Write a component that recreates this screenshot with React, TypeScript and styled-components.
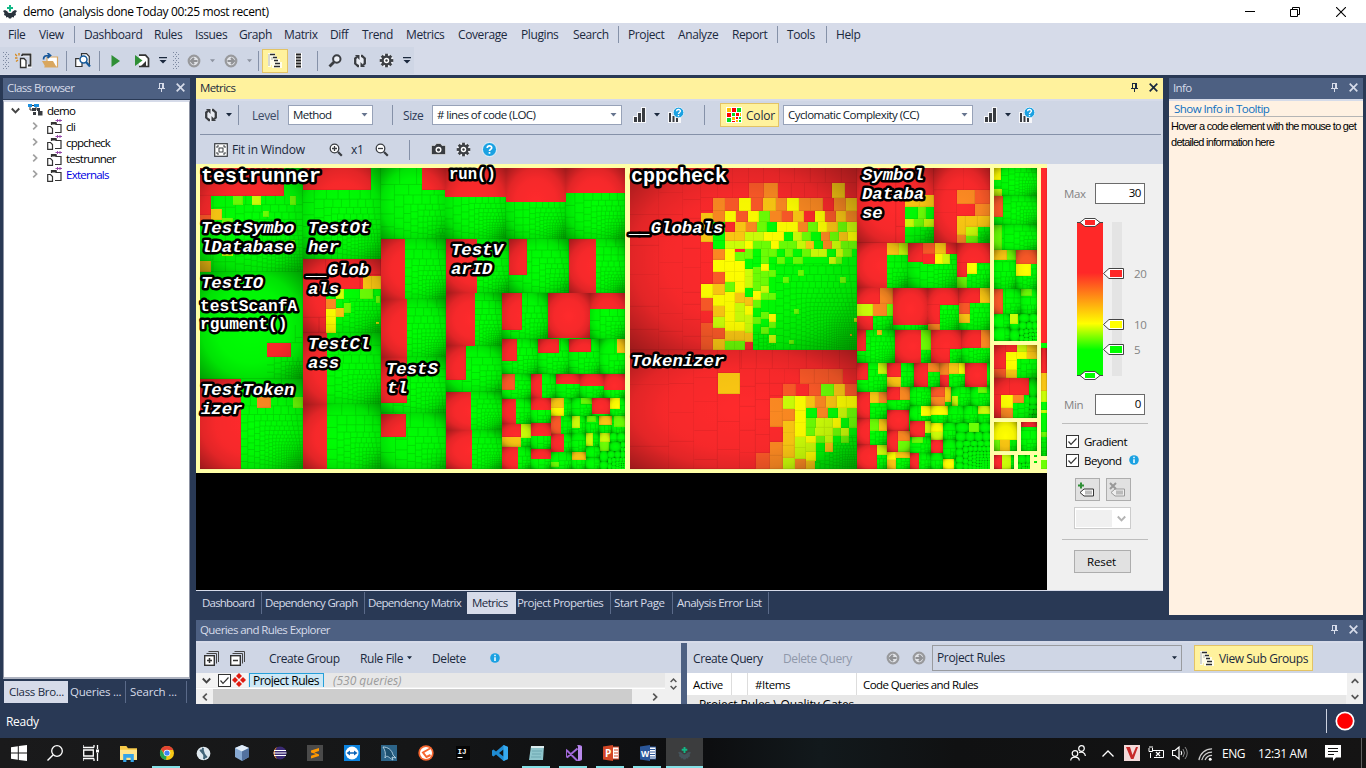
import React, { Fragment, ReactNode } from "react";
import styled, { createGlobalStyle } from "styled-components";

const navy = "#293955";
const slate = "#4d6082";
const mist = "#d6dbe9";
const bar = "#cfd6e5";
const ink = "#1b293e";

const Global = createGlobalStyle`
  body { margin: 0; background: ${navy}; }
  * { box-sizing: border-box; }
  svg { flex: none; }
  body, input, button { font-family: "Open Sans", "Noto Sans", sans-serif; font-size: 12px; letter-spacing: -0.4px; color: ${ink}; }
`;

/* ---------- flow helpers ---------- */

const Slot = styled.div<{ $w: number }>`
  width: ${(p) => p.$w}px;
  height: 100%;
  flex: none;
  display: flex;
  align-items: center;
  white-space: nowrap;
`;

type Item = [number, ReactNode];

function Run({ from, items }: { from: number; items: Item[] }) {
  return (
    <>
      <Slot $w={items[0][0] - from} />
      {items.map(([x, node], i) => (
        <Slot key={i} $w={i + 1 < items.length ? items[i + 1][0] - x : 0}>
          {node}
        </Slot>
      ))}
    </>
  );
}

const Sep = styled.i<{ $h?: number; $c?: string }>`
  width: 1px;
  height: ${(p) => p.$h ?? 20}px;
  flex: none;
  background: ${(p) => p.$c ?? "#8591a8"};
`;

const Text = styled.span<{ $c?: string; $ls?: number; $size?: number; $italic?: boolean }>`
  color: ${(p) => p.$c ?? "inherit"};
  letter-spacing: ${(p) => p.$ls ?? -0.4}px;
  font-size: ${(p) => p.$size ?? 12}px;
  font-style: ${(p) => (p.$italic ? "italic" : "normal")};
  flex: none;
`;

/* ---------- frame ---------- */

const Window = styled.div`
  width: 1366px;
  height: 768px;
  display: flex;
  flex-direction: column;
  overflow: hidden;
  background: ${navy};
`;
const TitleBar = styled.header`
  height: 23px;
  background: #fff;
  display: flex;
  flex: none;
  color: #000;
`;
const MenuBar = styled.nav`
  height: 24px;
  padding-bottom: 1px;
  background: ${mist};
  display: flex;
  flex: none;
`;
const ToolBand = styled.div`
  height: 28px;
  background: ${mist};
  display: flex;
  flex: none;
`;
const ToolStrip = styled.div`
  width: 414px;
  height: 27px;
  background: ${bar};
  display: flex;
`;
const Workspace = styled.main`
  height: 629px;
  padding: 3px 3px 0;
  display: flex;
  gap: 6px;
  flex: none;
`;
const Column = styled.div<{ $w: number }>`
  width: ${(p) => p.$w}px;
  display: flex;
  flex-direction: column;
  flex: none;
`;
const TopRow = styled.div`
  height: 537px;
  margin-bottom: 5px;
  display: flex;
  gap: 6px;
  flex: none;
`;
const PanelHead = styled.div<{ $active?: boolean }>`
  height: 21px;
  display: flex;
  flex: none;
  align-items: center;
  padding: 0 5px 2px 4px;
  background: ${(p) => (p.$active ? "#fff29d" : slate)};
  color: ${(p) => (p.$active ? ink : "#d6dbe9")};
  font-size: 11.5px;
  letter-spacing: -0.6px;
  > span { flex: 1; }
`;
const HeadTools = styled.div`
  display: flex;
  gap: 11px;
  align-items: center;
`;

function Head({ title, active }: { title: string; active?: boolean }) {
  const c = active ? ink : "#d6dbe9";
  return (
    <PanelHead $active={active}>
      <span>{title}</span>
      <HeadTools>
        <svg width="8" height="9" viewBox="0 0 8 9" shapeRendering="crispEdges">
          <path d="M2.500 0V6M2 .5H6.500M1 5.500H8M4.500 6V9" stroke={c} fill="none" />
          <rect x="5" width="2" height="6" fill={c} />
        </svg>
        <svg width="9" height="9" viewBox="0 0 9 9">
          <path d="M.7 .7L8.3 8.3M8.3 .7L.7 8.3" stroke={c} strokeWidth="1.7" />
        </svg>
      </HeadTools>
    </PanelHead>
  );
}

/* ---------- icons ---------- */

const Caret = ({ c = ink, w = 6 }: { c?: string; w?: number }) => (
  <svg width={w} height="4" viewBox="0 0 6 4"><path d="M0 0H6L3 3.5Z" fill={c} /></svg>
);
const OverCaret = () => (
  <svg width="8" height="7" viewBox="0 0 8 7"><path d="M0 0H8V1.3H0ZM.5 3H7.500L4 6.500Z" fill={ink} /></svg>
);
const Grip = () => (
  <svg width="6" height="18" viewBox="0 0 6 18">
    {Array.from({ length: 9 }, (_, i) => (
      <Fragment key={i}>
        <rect x={i % 2 ? 2 : 0} y={i * 2} width="1" height="1" fill="#7d89a1" />
        <rect x={i % 2 ? 5 : 3} y={i * 2} width="1" height="1" fill="#7d89a1" />
      </Fragment>
    ))}
  </svg>
);
const Refresh = () => (
  <svg width="14" height="14" viewBox="0 0 14 14">
    <circle cx="7" cy="7" r="6.500" fill="#fff" opacity=".55" />
    <g fill="none" stroke="#3a3d42" strokeWidth="2.300"><path d="M6 12H5L2.200 9.500V4.500L4 2.800M8 2H9L11.800 4.500V9.500L10 11.200" /></g>
    <path d="M2 1H6.500V6ZM12 13H7.500V8Z" fill="#3a3d42" />
  </svg>
);
const Gear = () => (
  <svg width="15" height="15" viewBox="-7.500 -7.500 15 15">
    <circle r="6.900" fill="#fff" opacity=".6" />
    {[0, 45, 90, 135].map((a) => <rect key={a} x="-1.400" y="-6.800" width="2.800" height="13.600" fill="#3d4045" transform={`rotate(${a})`} />)}
    <circle r="5" fill="#3d4045" /><circle r="2.700" fill="#fff" /><circle r="1.200" fill="#3d4045" />
  </svg>
);
const Magnifier = () => (
  <svg width="14" height="14" viewBox="0 0 14 14">
    <circle cx="8.800" cy="5" r="3.700" fill="#eef1f7" stroke="#3a3d42" strokeWidth="2" />
    <path d="M6 8L1.500 12.500" stroke="#3a3d42" strokeWidth="2.800" />
  </svg>
);
const Lens = ({ minus }: { minus?: boolean }) => (
  <svg width="14" height="14" viewBox="0 0 14 14">
    <circle cx="5.500" cy="5.500" r="4.300" fill="#fff" stroke="#3a3d42" strokeWidth="1.300" />
    <path d="M9 9L12.800 12.800" stroke="#3a3d42" strokeWidth="2.200" />
    <path d={minus ? "M3 5.500H8" : "M3 5.500H8M5.500 3V8"} stroke="#3a3d42" strokeWidth="1.300" />
  </svg>
);
const RoundArrow = ({ right }: { right?: boolean }) => (
  <svg width="14" height="14" viewBox="0 0 14 14">
    <circle cx="7" cy="7" r="5.300" fill="#e0e2e6" stroke="#98999c" strokeWidth="2.200" />
    <path d="M10.500 7H4.500M7 4L4 7L7 10" stroke="#909194" strokeWidth="2.200" fill="none" transform={right ? "rotate(180 7 7)" : undefined} />
  </svg>
);
const Hierarchy = () => (
  <svg width="14" height="15" viewBox="0 0 14 15">
    <path d="M0 0H7V3H9V6H12V9H14V15H4V12H3V14H0Z" fill="#fff" opacity=".8" />
    <path d="M1 1V13M4 4V7" stroke="#aeb2b4" fill="none" />
    <path d="M2 1.500H7M5 4.500H9M6 7.500H10M7 10.500H12M6 13.500H12" stroke="#2b2d30" strokeWidth="1.500" />
  </svg>
);
const Ladder = () => (
  <svg width="7" height="15" viewBox="0 0 7 15">
    <rect width="7" height="15" fill="#fff" /><path d="M1 1.500H6M1 4.500H6M1 7.500H6M1 10.500H6M1 13.500H6" stroke="#222" strokeWidth="1.800" />
  </svg>
);
const NewProject = () => (
  <svg width="17" height="16" viewBox="0 0 17 16">
    <path d="M7 1.500H16V13H11" fill="none" stroke="#fff" strokeWidth="4" opacity=".7" />
    <path d="M7 1.500H15.500V12.500H13M7 1.500V3" fill="none" stroke="#333" strokeWidth="1.800" />
    <path d="M5.500 5.500H9L11 7.500V14.500H5.500Z" fill="#fff" stroke="#333" strokeWidth="1.300" />
    <path d="M0 1L2 3M4 0V2.500M0 5H2.500M1 8.500L3 7" stroke="#d68b22" strokeWidth="1.400" />
  </svg>
);
const OpenProject = () => (
  <svg width="17" height="15" viewBox="0 0 17 15">
    <path d="M5 8V4H15.500V14H3Z" fill="#fff" stroke="#dba862" strokeWidth="1.200" />
    <path d="M0 8H11L14.500 14H3.500Z" fill="#d9a75f" />
    <path d="M1.500 6.500C1.500 3 3 2.500 7 2.500M5.500 0L8.500 2.500L5.500 5" fill="none" stroke="#16579b" strokeWidth="1.700" />
  </svg>
);
const DocSearch = () => (
  <svg width="16" height="15" viewBox="0 0 16 15">
    <path d="M6.500 3V.7H11.500L14.300 3.500V12" fill="#fff" stroke="#333" strokeWidth="1.200" />
    <path d="M4.500 5.700H.7V13.500H7V10" fill="#fff" stroke="#333" strokeWidth="1.200" />
    <circle cx="8.500" cy="6.500" r="3.500" fill="#fff" stroke="#155a9b" strokeWidth="1.500" /><path d="M11 9L15 13.500" stroke="#155a9b" strokeWidth="2.200" />
  </svg>
);
const Play = () => <svg width="10" height="12" viewBox="0 0 10 12"><path d="M.500 0L9 6L.500 12Z" fill="#2f8f36" /></svg>;
const PlayDoc = () => (
  <svg width="15" height="14" viewBox="0 0 15 14">
    <path d="M4 1.200H10.500L13.500 4.500V12.500H4" fill="#fff" stroke="#333" strokeWidth="1.700" /><path d="M0 1L7.500 6.500L0 12Z" fill="#2f8f36" /><path d="M6 12L11 7V12Z" fill="#333" />
  </svg>
);
const Bars = () => (
  <svg width="13" height="16" viewBox="0 0 13 16">
    <path d="M0 9H4V5H8V0H13V16H0Z" fill="#fff" opacity=".8" />
    <path d="M1 10H4V15H1ZM5 6H8V15H5ZM9 1H12V15H9Z" fill="#393c41" />
  </svg>
);
const BarsHelp = () => (
  <svg width="16" height="16" viewBox="0 0 16 16">
    <path d="M0 5H4V8H13V16H0Z" fill="#fff" opacity=".8" />
    <path d="M1 6H3V15H1ZM4.500 9H6.500V15H4.500ZM8 11H10V15H8Z" fill="#393c41" />
    <circle cx="10.500" cy="5.500" r="5.300" fill="#1ba1e2" stroke="#fff" strokeWidth=".7" />
    <path d="M8.500 4.200C8.700 1.800 12.500 2 12.400 4.300C12.300 5.500 10.500 5.600 10.500 7M10.500 8V9.200" stroke="#fff" strokeWidth="1.400" fill="none" />
  </svg>
);
const Help = () => (
  <svg width="15" height="15" viewBox="0 0 15 15">
    <circle cx="7.500" cy="7.500" r="7" fill="#1ba1e2" stroke="#fff" strokeWidth=".8" />
    <path d="M5.200 6C5.400 3 9.900 3.200 9.700 6C9.500 7.400 7.500 7.400 7.500 9M7.500 10V11.800" stroke="#fff" strokeWidth="1.700" fill="none" />
  </svg>
);
const InfoDot = () => (
  <svg width="10" height="10" viewBox="0 0 10 10"><circle cx="5" cy="5" r="4.800" fill="#1ba1e2" /><path d="M5 1.800V3.200M5 4.200V8" stroke="#fff" strokeWidth="1.500" /></svg>
);
const Camera = () => (
  <svg width="15" height="13" viewBox="0 0 15 13">
    <path d="M.500 2.500H4L5.500.500H9.500L11 2.500H14.500V11.500H.500Z" fill="#393c41" stroke="#fff" strokeWidth=".5" /><circle cx="7.500" cy="6.800" r="3" fill="#fff" /><circle cx="7.500" cy="6.800" r="1.600" fill="#393c41" />
  </svg>
);
const Fit = () => (
  <svg width="14" height="14" viewBox="0 0 14 14">
    <rect x=".700" y=".700" width="12.600" height="12.600" fill="#fff" stroke="#393c41" strokeWidth="1.200" />
    <rect x="5" y="5" width="4" height="4" fill="none" stroke="#393c41" />
    <path d="M3 5V3H5M9 3H11V5M11 9V11H9M5 11H3V9" fill="none" stroke="#393c41" />
  </svg>
);
const Palette = () => {
  const r = "#ff0000", g = "#00dd22", a = "#ffbf00";
  const sq: [number, number, number, number, string][] = [
    [0, 0, 4, 4, a], [5, 0, 4, 4, r], [10, 0, 4, 4, g], [0, 5, 4, 4, r], [5, 5, 3, 3, g], [9, 5, 3, 3, r], [13, 5, 1, 3, a],
    [0, 10, 4, 4, g], [5, 9, 3, 3, a], [9, 9, 2, 2, r], [12, 9, 2, 2, g], [5, 13, 3, 1, r], [9, 12, 2, 2, a], [12, 12, 2, 2, g],
  ];
  return (
    <svg width="16" height="16" viewBox="-1 -1 16 16" shapeRendering="crispEdges"><rect x="-1" y="-1" width="16" height="16" fill="#fff" />
      {sq.map(([x, y, w, h, c], i) => <rect key={i} x={x} y={y} width={w} height={h} fill={c} />)}
    </svg>
  );
};
const AppLogo = ({ c = "#29323c", s = 14 }: { c?: string; s?: number }) => (
  <svg width={s} height={s} viewBox="0 0 14 14">
    <path d="M0 6L2 5L4.500 6.500C5 8.500 9 8.500 9.500 6.500L12 5L14 6L12.500 8L13 10L11 11V12.500L9 12L8 13.500H6L5 12L3 12.500V11L1 10L1.500 8Z" fill={c} />
    <path d="M4 3H10M7 0V6.500" stroke="#12b886" strokeWidth="2" />
  </svg>
);
const Chevron = ({ dir, c = "#555", w = 8 }: { dir: "up" | "down" | "left" | "right"; c?: string; w?: number }) => {
  const turn = { down: 0, left: 90, up: 180, right: 270 }[dir];
  return (
    <svg width={w} height={w} viewBox="0 0 8 8"><path d="M.700 2.200L4 5.600L7.300 2.200" stroke={c} strokeWidth="1.700" fill="none" transform={`rotate(${turn} 4 4)`} /></svg>
  );
};

/* ---------- class browser ---------- */

const TreeBox = styled.div`
  height: 579px;
  margin-top: 1px;
  background: #fff;
  border: 1px solid #8d93a3;
  border-top: 2px solid ${mist};
  border-bottom: 2px solid #aeb3c0;
`;
const TreeRow = styled.div<{ $depth: number; $link?: boolean }>`
  height: 16px;
  display: flex;
  align-items: center;
  gap: ${(p) => (p.$depth ? 8 : 8)}px;
  padding-left: ${(p) => (p.$depth ? 27 : 7)}px;
  color: ${(p) => (p.$link ? "#0000e0" : "#000")};
  font-size: 11.5px;
  letter-spacing: -0.75px;
  svg + svg + span { margin-left: -4px; }
`;
const NamespaceIcon = () => (
  <svg width="15" height="15" viewBox="0 0 15 15">
    <path d="M4.500 6V3.500H9V5.500H14V13.500H8" fill="none" stroke="#333" strokeWidth="1.200" />
    <path d="M4 3H9L10 5.500H4Z" fill="#333" />
    <path d="M.700 7.500H3.500L5.500 9.500V14.300H.700Z" fill="#fff" stroke="#333" strokeWidth="1.200" />
    <path d="M8.500 1.500H15M10.500 0V3M13 0V3" stroke="#8d3aa2" strokeWidth=".9" />
  </svg>
);
const RootIcon = () => (
  <svg width="15" height="12" viewBox="0 0 15 12">
    <path d="M0 0H4V3H0ZM6 0H11V3H6Z" fill="#1b8fe0" /><path d="M4 1.500H6M2 3V6H5M8 3V6" stroke="#333" fill="none" />
    <path d="M4 4H8V7H4ZM9 4H12V7H9ZM5 8H8V11H5ZM10 7H14.500V11.500H10Z" fill="#393c41" />
  </svg>
);
const Tabs = styled.div<{ $top: number }>`
  height: 23px;
  margin-top: ${(p) => p.$top}px;
  display: flex;
  flex: none;
  align-items: flex-start;
  color: #d6dbe9;
`;
const Tab = styled.div<{ $w: number; $on?: boolean; $line?: boolean; $pad?: number; $ls?: number }>`
  width: ${(p) => p.$w}px;
  height: 22px;
  padding-left: ${(p) => p.$pad ?? 4}px;
  line-height: 22px;
  white-space: nowrap;
  font-size: 11.5px;
  letter-spacing: ${(p) => p.$ls ?? -0.55}px;
  flex: none;
  overflow: hidden;
  background: ${(p) => (p.$on ? mist : "transparent")};
  color: ${(p) => (p.$on ? ink : "inherit")};
  border-right: ${(p) => (p.$line ? "1px solid #5a6a89" : "0")};
`;

/* ---------- metrics panel ---------- */

const MetricBars = styled.div`
  height: 65px;
  background: ${bar};
  border-top: 2px solid ${mist};
  flex: none;
`;
const Row = styled.div<{ $h: number }>`
  height: ${(p) => p.$h}px;
  display: flex;
`;
const Rule = styled.div<{ $m?: string; $c?: string }>`
  height: 1px;
  margin: ${(p) => p.$m ?? "0"};
  background: ${(p) => p.$c ?? "#8591a8"};
  flex: none;
`;
const Select = styled.div<{ $w: number; $h?: number; $flat?: boolean }>`
  width: ${(p) => p.$w}px;
  height: ${(p) => p.$h ?? 20}px;
  display: flex;
  align-items: center;
  justify-content: space-between;
  padding: 0 4px 1px;
  flex: none;
  background: ${(p) => (p.$flat ? bar : "#fff")};
  border: 1px solid ${(p) => (p.$flat ? "#999b9f" : "#97a2b8")};
  color: ${(p) => (p.$flat ? ink : "#111b2c")};
  font-size: ${(p) => (p.$flat ? 12 : 11.5)}px;
  letter-spacing: ${(p) => (p.$flat ? -0.35 : -0.55)}px;
`;
const Toggle = styled.div<{ $w: number; $h: number; $gap?: number }>`
  width: ${(p) => p.$w}px;
  height: ${(p) => p.$h}px;
  display: flex;
  align-items: center;
  gap: ${(p) => p.$gap ?? 0}px;
  padding-left: 5px;
  flex: none;
  background: #fff29d;
  border: 1px solid #e3c365;
`;
const MetricBody = styled.div`
  height: 427px;
  display: flex;
  flex: none;
  border-bottom: 1px solid ${mist};
`;
const MapArea = styled.div`
  width: 851px;
  background: #000;
  > svg { display: block; }
`;
const Controls = styled.div`
  width: 116px;
  background: #f0f0f0;
  padding-top: 19px;
  display: flex;
  flex-direction: column;
  color: #000;
`;
const LimitRow = styled.div`
  height: 21px;
  display: flex;
  align-items: center;
  justify-content: space-between;
  padding: 0 18px 0 17px;
  color: #838383;
  flex: none;
  font-size: 11.5px;
  line-height: 19px;
`;
const NumberBox = styled.div`
  width: 50px;
  height: 21px;
  border: 1px solid #6b6b6b;
  background: #fff;
  color: #000;
  text-align: right;
  padding-right: 3px;
  line-height: 18px;
  font-size: 11.5px;
`;
const CheckRow = styled.div`
  height: 19px;
  display: flex;
  align-items: center;
  gap: 5px;
  padding: 0 0 1px 19px;
  flex: none;
  font-size: 11.500px;
  letter-spacing: -0.5px;
`;
const Nudge = styled.span`
  display: flex;
  margin-left: 2px;
`;
const ButtonRow = styled.div<{ $top: number; $left?: number }>`
  margin-top: ${(p) => p.$top}px;
  padding-left: ${(p) => p.$left ?? 27}px;
  display: flex;
  gap: 6px;
  flex: none;
`;
const GreyButton = styled.div<{ $w: number }>`
  width: ${(p) => p.$w}px;
  height: 23px;
  display: flex;
  align-items: center;
  justify-content: center;
  background: #e1e1e1;
  border: 1px solid #adadad;
  font-size: 11.500px;
  letter-spacing: -0.1px;
  padding-right: 2px;
`;
const DisabledCombo = styled.div`
  width: 57px;
  height: 22px;
  padding: 2px 4px 2px 1px;
  border: 1px solid #ccc;
  background: #fff;
  display: flex;
  align-items: center;
  justify-content: space-between;
  &::before { content: ""; width: 36px; height: 17px; background: #f0f0f0; }
`;
const Checked = () => (
  <svg width="13" height="13" viewBox="0 0 13 13"><rect x=".500" y=".500" width="12" height="12" fill="#fff" stroke="#333" /><path d="M2.500 6.500L5 9.300L10.500 3.500" fill="none" stroke="#333" strokeWidth="1.200" /></svg>
);
const ScaleArt = styled.svg`
  display: block;
`;

function Scale() {
  const end = (y: number, c: string) => (
    <g>
      <path d={`M17 ${y}H20L25 ${y - 4}H35L40 ${y}H43M20 ${y}L25 ${y + 4}H35L40 ${y}`} fill="#fff" stroke="#444" />
      <rect x="25" y={y - 2.500} width="10" height="5" fill={c} />
    </g>
  );
  const thumb = (y: number, c: string, t: string) => (
    <g>
      <path d={`M43.500 ${y}L49 ${y - 5}H63.500V${y + 5}H49Z`} fill="#fff" stroke="#444" />
      <rect x="50" y={y - 3.500} width="12" height="7" fill={c} />
      <text x="74" y={y + 4.500} fontSize="11.500" fill="#838383">{t}</text>
    </g>
  );
  return (
    <ScaleArt width="104" height="162" viewBox="-13 0 104 162">
      <defs>
        <linearGradient id="scale" x2="0" y2="1">
          <stop offset=".33" stopColor="#ff2828" /><stop offset=".66" stopColor="#ffff00" /><stop offset=".83" stopColor="#00ff00" />
        </linearGradient>
      </defs>
      <rect x="17" y="4" width="26" height="154" fill="url(#scale)" />
      <rect x="52" y="4" width="10" height="154" fill="#e4e4e4" />
      {end(4.500, "#ff2828")}{end(157.500, "#00ff00")}
      {thumb(55.500, "#ff2828", "20")}{thumb(106.500, "#ffff00", "10")}{thumb(131.500, "#00ff00", "5")}
    </ScaleArt>
  );
}

/* ---------- treemap ---------- */

const tones: Record<string, string> = {
  r: "#ff2a2c", g: "#00ff04", y: "#ffff00", a: "#fcc813", o: "#fd8a22", p: "#fd5a28", l: "#6cff05", k: "#ccff08",
};

type Box = [number, number, number, number];

// Squarified split of a box into n shrinking cells, largest first.
function split([bx, by, bx2, by2]: Box, n: number): Box[] {
  let x = bx, y = by, w = bx2 - bx, h = by2 - by;
  const raw = Array.from({ length: n }, (_, i) => 1 / (1 + (4 * i) / n) ** 2);
  const sum = raw.reduce((a, b) => a + b, 0);
  const areas = raw.map((v) => (v / sum) * w * h);
  const out: Box[] = [];
  let i = 0;
  while (i < n) {
    const side = Math.min(w, h);
    let total = areas[i], j = i + 1;
    const worst = (t: number, hi: number, lo: number) => Math.max((side * side * hi) / (t * t), (t * t) / (side * side * lo));
    while (j < n && worst(total + areas[j], areas[i], areas[j]) <= worst(total, areas[i], areas[j - 1])) total += areas[j++];
    const depth = total / side;
    let run = 0;
    for (let k = i; k < j; k++) {
      const len = areas[k] / depth;
      out.push(w >= h ? [x, y + run, x + depth, y + run + len] : [x + run, y, x + run + len, y + depth]);
      run += len;
    }
    if (w >= h) { x += depth; w -= depth; } else { y += depth; h -= depth; }
    i = j;
  }
  return out;
}

// G box n        group with n green cells      L/T box edge n   red on the left / top up to edge
// B box tone [n] block                          H y1 y2 x t x t x   row of cells
// V x1 x2 y t y  column of cells                S box n          n tiny cushions
const testrunner = `
G 15 24 324 336 2;B 15 24 267 107 r;B 15 107 324 336 g 210;V 15 48 107 r 165 p 195 g 303 a 336;H 147 180 48 a 81;H 107 134 113 l 143;H 107 134 171 k 197;H 107 134 284 l 303;H 153 171 204 l 221;H 174 195 81 l 113;H 280 287 82 k 113;H 240 248 285 l 299
G 324 24 558 298 4;B 324 24 528 90 r;B 324 90 558 298 g 180
G 15 336 324 657 1;B 216 495 324 549 g 3;B 216 591 324 657 g 60;B 216 549 288 591 r
G 15 657 324 927 3;B 138 710 324 927 g 240;B 15 657 138 927 r;B 186 712 227 743 o;B 293 710 323 743 l
G 324 298 558 518 1;B 324 298 393 518 r 3;B 393 298 558 388 r 5;B 393 388 558 518 g 110;H 348 388 504 a 531 a 558;H 388 417 423 k 447 g 495 l 535;V 393 423 418 o 447 y 471 y 495 y 518;B 423 444 447 471 a;B 447 430 467 460 l;B 543 408 556 428 l;B 543 486 551 492 y
L 324 518 558 733 396 120
L 324 733 558 927 396 100
G 558 24 753 237 70;B 681 24 753 90 r
L 558 237 753 418 630 100
L 558 418 753 592 636 120
G 558 592 753 760 90;B 558 592 636 729 r
G 558 760 753 927 55;B 558 762 633 831 r`;

const testrunnerRight = `
T 105 24 288 237 111 130;T 288 24 467 237 126 120;T 467 24 645 237 99 110
L 108 237 297 399 201 60
G 297 237 477 399 70;B 297 237 351 346 r
L 477 237 645 399 558 90;L 108 399 276 557 195 90
G 276 399 413 537 55;B 276 399 336 510 r
T 413 399 540 537 534 4;T 540 399 645 537 447 40
G 108 557 276 696 40;B 108 557 167 660 r
G 276 537 384 642 40;B 276 537 321 603 r
G 384 537 477 642 32;B 384 537 447 579 r
G 477 537 570 642 30;B 477 537 543 575 r
G 570 537 645 642 16;B 621 537 645 579 a
L 108 696 276 811 183 90;L 108 811 276 927 186 90
G 276 642 363 716 24;B 276 642 315 690 p
L 363 642 438 714 396 16;T 438 642 510 714 671 16;T 510 642 582 714 678 16;T 582 642 645 714 690 12
L 276 716 363 791 318 20;T 363 714 423 789 749 12
G 423 714 485 768 10;V 423 461 714 a 745 y 768
G 485 714 545 768 16;B 512 714 545 731 l
T 545 714 600 768 762 3
G 600 714 645 768 9;B 600 714 630 747 y
G 276 791 363 860 9;B 276 791 333 831 r;B 276 831 333 860 a;B 333 791 363 833 k
T 363 789 423 867 828 12
G 423 768 485 822 10;B 423 768 453 822 p
G 485 768 527 822 10;B 485 768 510 803 k
G 527 768 567 820 8;B 530 768 557 785 l
G 567 768 605 820 6;B 567 768 605 795 a
G 605 768 645 820 8;B 613 768 645 800 l
L 423 822 485 876 461 8
G 485 820 527 876 10
G 527 820 567 860 6;B 527 820 549 857 k
G 567 820 600 876 4;B 569 820 600 846 k;B 569 846 597 874 l
G 600 820 622 846 3
G 622 820 645 846 3
L 276 860 363 927 324 16;T 363 867 423 927 897 10
G 423 876 485 927 10;B 423 905 448 921 l
G 485 876 527 927 8;B 485 876 527 899 a
G 527 860 570 893 5
G 527 893 570 927 5
S 570 874 645 927 26
S 600 846 645 874 4`;

const cppcheck = `
G 15 24 696 570 1;B 15 24 696 570 r;V 15 103 24 r 165 r 257 r 346 r 440 r 509 r 570;V 103 175 24 r 100 r 165 r 232 r 310 r 388 r 463 r 515 r 570;V 175 228 24 r 120 r 176 r 266 r 325 r 398 r 434 r 480 r 530 r 570;H 24 69 228 r 280 r 325 r 372 r 417 r 465 r 510 r 557 r 602 r 650 r 696;H 69 114 228 r 280 r 325 r 372 p 417 o 459 r 500 r 540 r 580 r 621 a 660 r 696
H 114 153 228 r 264 o 301 p 342 y 378 p 413 a 453 o 486 y 522 o 558 o 594 r 627 o 663 a 696;H 153 186 264 o 300 y 333 p 369 y 401 l 435 o 470 p 504 a 537 r 570 y 600 p 633 a 664 o 696;H 186 216 264 g 301 r 330 a 363 o 395 l 425 g 455 y 487 y 519 o 549 l 578 y 607 a 638 l 667 k 696
H 216 243 264 g 300 a 330 a 360 k 387 k 417 y 445 y 477 g 504 k 530 l 557 g 587 o 615 l 642 a 669 y 696;H 243 267 264 g 300 k 330 k 360 y 384 l 411 l 438 y 462 l 490 l 516 k 543 a 567 g 594 o 621 k 648 l 672 l 696;H 267 291 384 g 407 l 431 l 455 g 479 l 503 g 530 l 557 k 582 k 606 g 632 k 655 l 680 g 696
B 384 291 453 570 g 45;B 453 291 696 570 g 420;H 291 312 384 g 407 l 431 g 455 l 480 g 505 l 533 g 612 k 632 l 652 g
V 228 264 160 a 215 a 246 r 310 r 372 y 413 p 453 r 490 p 530 p 570;V 264 300 267 o 299 y 336 p 371 a 405 y 438 a 471 k 503 p 537 a 570;V 300 330 267 y 306 y 336 y 366 l 396 y 427 y 457 y 486 y 514 a 542 l 570;V 330 360 275 l 303 y 336 y 366 y 398 a 429 k 457 k 485 y 514 a 542 l 570;V 360 384 268 l 297 g 327 k 352 k 384 g 412 a 437 y 466 k 493 k 518 a 546 r 570;V 384 408 320 l 342 l 366 l 393 y 419 l 444 g 470 l 493 g 518 g
V 408 432 291 l 312 y 332 l 354 l 377 k 398 l 420 g 455 l 478 g 500 l 522 l;V 432 453 330 l 352 g 400 l 420 g 461 y 485 l 505 g 526 k 548 g;B 645 351 663 369 l;B 507 447 521 461 l;B 492 540 506 553 l;B 675 521 681 528 a;B 474 351 492 368 l;B 519 330 537 348 l;B 686 473 696 486 k
G 15 570 696 927 1;B 15 570 696 927 r;V 15 133 570 r 676 r 860 r 927;V 133 208 570 r 672 r 760 r 845 r 927;V 208 278 570 r 655 r 727 r 813 r 900 r 927;H 570 627 300 r 350 r 395 r 443 r 493 r 545 r 595 r 645 r 696;V 278 345 570 r 639 a 702 r 786 r 870 r 927;V 345 392 627 r 680 r 740 r 812 r 880 r 927;V 392 435 627 r 671 r 720 r 779 r 825 r 879 p 927;H 627 671 435 r 481 r 524 p 569 p 612 p 653 r 696;H 671 708 435 r 473 p 512 r 552 p 588 l 627 a 660 p 696
B 543 743 696 927 g 140;V 435 473 713 o 757 o 800 r 845 o 887 o 927;V 473 509 708 k 747 o 782 a 820 a 857 a 893 k 927;V 509 543 708 y 753 y 790 y 831 k 864 k 897 o 927;H 708 743 543 a 571 o 603 a 635 y 665 y 696;H 743 773 543 g 576 o 609 g 639 k 667 l 696;H 773 803 543 l 573 k 599 k 624 y 648 g 672 l 696;H 803 828 543 l 571 k 599 k 624 l 648 k 672 g 696;H 828 849 543 y 573 l 600 k 624 g 648 l 672 g;H 849 876 543 k 573 g 600 a 624 g;H 876 903 543 y 573 g 600 l;H 903 927 543 a 571 g`;

const cppcheckRight = `
G 21 24 252 249 1;B 21 24 252 249 r 7;H 105 140 165 a 209 a 252;H 140 177 165 g 203 l 227 g 252;H 177 200 165 k 191 l 222 k 252;B 165 200 252 249 g 22
G 252 24 420 249 1;B 252 24 420 249 r;V 252 321 90 r 160 r 249;H 24 90 252 r 343 r 420;H 90 132 321 o 375 p 420;H 132 168 321 r 375 o 420;H 168 200 321 a 383 a 420;V 321 347 168 a 225 o 249;V 347 383 200 k 227 l 249;B 383 200 420 249 g 22
L 21 249 174 384 111 40;H 249 285 111 a 148 k 174
G 174 249 321 384 65;B 174 249 219 306 r;H 249 282 219 p 255 a 288 r 321;H 282 311 219 r 255 y 279 k 300
G 321 249 420 384 34;B 321 249 420 309 r;V 321 351 309 r 350 l 384;B 351 309 381 341 y
G 21 384 129 510 26;H 384 431 21 r 90 o 129;H 431 469 21 k 69 o 111 l 129;B 21 469 69 510 r
T 129 384 233 510 495 12
G 233 384 327 510 60;B 233 384 327 435 r;V 233 270 435 r 492 o 510
G 327 384 420 510 38;H 384 429 327 r 390 a 420;V 327 360 429 p 462 a 490
G 21 510 135 609 75;B 21 510 48 573 r;B 81 510 96 525 a
L 135 510 242 609 213 12;B 213 510 242 570 l
G 242 510 336 609 20;B 242 510 336 567 r;B 242 567 300 609 r
G 336 510 420 609 40;H 510 563 336 r 393 o 420
G 21 609 111 695 28;B 21 609 54 660 r;B 84 609 111 641 k
G 111 609 192 681 16;V 111 153 609 r 651 a 681
G 192 609 270 681 16;B 192 609 234 681 r;B 234 609 270 636 o
G 270 609 345 681 12;V 270 297 609 o 645 r 681;H 609 641 297 a 327 y 345
L 345 609 420 681 411 3
G 21 695 111 776 16;B 21 695 60 776 r;H 695 730 60 a 86 o 111
G 111 681 180 750 16;H 681 720 111 r 150 o 180
G 180 681 243 737 24
G 243 681 306 737 9;V 243 285 681 p 710 o 737;B 285 681 303 725 a
G 306 681 363 737 16;B 306 708 324 737 k
G 363 681 420 737 16;B 385 681 410 700 l
G 21 776 111 855 20;B 21 776 60 855 r;H 776 812 60 l 87 a 111
G 111 750 180 812 3;B 111 750 177 812 r
G 180 737 243 783 10;B 213 737 243 768 y
T 243 737 294 789 765 9;H 737 765 243 y 294
G 294 737 342 789 12
G 342 737 384 789 12
G 384 737 420 789 6;B 384 737 420 762 k
G 180 783 243 831 9;B 180 783 225 831 r;B 225 783 243 820 k
G 243 789 280 839 6;V 243 280 789 y 815 k 839
G 111 812 180 876 9;V 111 144 812 r 876;V 144 180 812 o 843 l 876
G 180 831 243 880 12;B 185 831 220 850 l
G 243 839 280 880 2;B 243 839 280 880 r
G 21 855 111 927 16;B 21 855 81 927 r;B 81 855 111 885 k
G 111 876 180 927 16;V 111 138 876 y 900 a 927;H 876 895 138 a 180
G 180 880 243 927 12;B 180 880 207 927 r
G 243 880 280 927 8
G 280 789 318 839 8
G 280 839 318 897 8
G 280 897 318 927 3;B 280 897 312 927 y
S 318 789 420 927 64;H 789 815 357 l 387
G 432 24 561 107 75;B 432 24 453 60 y;B 432 86 455 107 k
G 432 107 561 194 60;B 432 107 459 171 p
G 432 194 561 270 34;B 432 194 456 270 l
G 432 270 498 387 26;H 270 300 432 a 471 l 498
G 498 270 561 387 26;B 498 270 561 311 p;B 498 311 543 348 y
G 432 387 513 462 16;B 432 387 459 462 p
G 513 387 561 462 12;B 513 387 546 408 l
G 432 462 480 504 5
G 432 504 480 543 4
S 480 462 561 543 22;B 480 462 504 491 k
G 432 555 561 654 16;V 432 468 555 r 627 p 654;B 468 555 501 576 r;V 468 501 576 y 603 y 630 a 654;H 555 575 501 k 531 a 561;H 575 598 501 y 531 a 561
G 432 654 561 774 24;H 654 705 432 r 480 r 537;B 432 705 453 774 r;V 453 489 705 y 743 o 774;B 489 705 522 730 o;S 537 654 561 774 8
G 432 786 501 873 6;B 432 786 501 840 y;V 432 450 840 l 873;B 450 840 480 873 a
G 513 786 561 873 14;B 513 786 561 801 r
G 432 885 492 927 8;H 885 927 432 r 456 k 484
S 504 885 540 927 10
G 552 885 561 891 1
G 552 903 561 909 1
V 573 591 24 r 549 g 564;G 573 564 591 888 16;V 573 591 564 r 640 a 693 k 727 g 750 k 760 g 815 l 830 g;B 573 900 591 927 l`;

function Cells({ source }: { source: string }) {
  const out: ReactNode[] = [];
  let key = 0;
  let open: Box | null = null;
  const rect = ([a, b, c, d]: Box, fill: string) => {
    out.push(<rect key={key++} x={a} y={b} width={c - a} height={d - b} fill={fill} />);
  };
  const edges = (boxes: Box[], opacity: number) => {
    const d = boxes.map(([a, b, c, e]) => `M${a.toFixed(1)} ${(e - 1).toFixed(1)}H${(c - 1).toFixed(1)}V${b.toFixed(1)}`).join("");
    out.push(<path key={key++} d={d} fill="none" stroke="#000" strokeOpacity={opacity} strokeWidth="2.400" shapeRendering="auto" />);
  };
  const grid = (box: Box, n: number) => edges(split(box, n), 0.14);
  const cell = (box: Box, tone: string) => {
    rect(box, tones[tone]);
    edges([box], 0.1);
  };
  const close = () => {
    if (open) rect(open, "url(#cushion)");
    open = null;
  };
  for (const cmd of source.split(/[;\n]/)) {
    const t = cmd.trim().split(/\s+/);
    const op = t[0];
    if (!op) continue;
    const v = t.slice(1).map(Number);
    const box: Box = [v[0], v[1], v[2], v[3]];
    if (op === "G" || op === "L" || op === "T") {
      close();
      open = box;
      rect(box, tones.g);
      if (op === "G") grid(box, v[4]);
      else {
        const [a, b, c, d] = box;
        grid(op === "L" ? [v[4], b, c, d] : [a, v[4], c, d], v[5]);
        rect(op === "L" ? [a, b, v[4], d] : [a, b, c, v[4]], tones.r);
      }
    } else if (op === "B") {
      if (v[5]) { rect(box, tones[t[5]]); grid(box, v[5]); } else cell(box, t[5]);
    } else if (op === "S") {
      for (const b of split(box, v[4])) { rect(b, tones.g); rect(b, "url(#bead)"); }
    } else {
      for (let i = 2; i + 2 < v.length; i += 2)
        cell(op === "H" ? [v[i], v[0], v[i + 2], v[1]] : [v[0], v[i], v[1], v[i + 2]], t[i + 2]);
    }
  }
  close();
  return <>{out}</>;
}

const MapLabel = styled.text<{ $size: number; $upright?: boolean }>`
  font: ${(p) => (p.$upright ? "normal" : "italic")} bold ${(p) => p.$size}px "Liberation Mono", monospace;
  letter-spacing: 0;
  fill: #fff;
  stroke: #000;
  stroke-width: 5px;
  stroke-linejoin: round;
  paint-order: stroke;
`;

const labels: [number, number, string, number, boolean?][] = [
  [201, 182, "testrunner", 20, true], [201, 233, "TestSymbo", 17.3], [201, 252, "lDatabase", 17.3], [201, 288, "TestIO", 17.3],
  [200, 311, "testScanfA", 16.2, true], [200, 329, "rgument()", 16.2, true], [201, 395, "TestToken", 17.3], [201, 414, "izer", 17.3],
  [308, 233, "TestOt", 17.3], [308, 252, "her", 17.3], [307, 275, "__Glob", 17.3], [308, 294, "als", 17.3], [308, 349, "TestCl", 17.3],
  [308, 368, "ass", 17.3], [449, 179, "run()", 15.6, true], [451, 255, "TestV", 17.3], [451, 274, "arID", 17.3], [386, 374, "TestS", 17.3],
  [387, 393, "tl", 17.3], [631, 182, "cppcheck", 20, true], [630, 233, "__Globals", 17.3], [631, 366, "Tokenizer", 17.3],
  [862, 180, "Symbol", 17.3], [862, 199, "Databa", 17.3], [862, 218, "se", 17.3],
];

function TreeMap() {
  const stops = (max: number) => (
    <>
      <stop offset="0" stopOpacity="0" /><stop offset=".5" stopOpacity={max * 0.1} /><stop offset=".7" stopOpacity={max * 0.3} /><stop offset="1" stopOpacity={max} />
    </>
  );
  return (
    <svg width="851" height="309" viewBox="196 164 851 309">
      <defs>
        <radialGradient id="cushion" r=".7">{stops(0.38)}</radialGradient>
        <radialGradient id="bead" r=".75">{stops(0.6)}</radialGradient>
      </defs>
      <rect x="196" y="164" width="851" height="309" fill="#ffffa6" />
      <g shapeRendering="crispEdges">
        <g transform="translate(195 160) scale(.33333)"><Cells source={testrunner} /></g>
        <g transform="translate(410 160) scale(.33333)"><Cells source={testrunnerRight} /></g>
        <g transform="translate(625 160) scale(.33333)"><Cells source={cppcheck} /></g>
        <g transform="translate(850 160) scale(.33333)"><Cells source={cppcheckRight} /></g>
      </g>
      {labels.map(([x, y, t, s, up]) => <MapLabel key={t + x + y} x={x} y={y} $size={s} $upright={up}>{t}</MapLabel>)}
    </svg>
  );
}

/* ---------- info panel ---------- */

const InfoBody = styled.div`
  flex: 1;
  background: #fff1e2;
  border-top: 2px solid ${mist};
  color: #000;
`;
const InfoLink = styled.div`
  height: 16px;
  line-height: 16px;
  padding-left: 5px;
  border-bottom: 1px solid #b5b5b5;
  color: #0e70c0;
  font-size: 11.5px;
  letter-spacing: -0.55px;
`;
const InfoText = styled.p`
  margin: 1px 0 0 2px;
  font: 11px/16px "Liberation Sans", Arial, sans-serif;
  letter-spacing: -0.72px;
  white-space: nowrap;
`;

/* ---------- queries ---------- */

const QueryBody = styled.div`
  flex: 1;
  display: flex;
  gap: 6px;
  background: ${slate};
  border-top: 2px solid ${mist};
  overflow: hidden;
`;
const QueryPane = styled.section<{ $w: number }>`
  width: ${(p) => p.$w}px;
  display: flex;
  flex-direction: column;
  background: ${bar};
`;
const Listing = styled.div`
  display: flex;
  height: 31px;
  background: #f0f0f0;
  color: #000;
`;
const RuleRow = styled.div`
  height: 14px;
  width: 469px;
  display: flex;
  background: linear-gradient(90deg, #f4f4f4 52px, #e7e7e7 52px);
  overflow: hidden;
`;
const Selected = styled.span`
  width: 75px;
  height: 16px;
  margin-top: 2px;
  padding-left: 3px;
  line-height: 14px;
  background: #cce8f6;
  border: 1px solid #26a0da;
  letter-spacing: -0.5px;
  flex: none;
`;
const HScroll = styled.div`
  height: 17px;
  margin-top: 1px;
  width: 469px;
  display: flex;
  align-items: center;
  padding: 0 5px 1px;
  gap: 4px;
  background: #f0f0f0;
  border-top: 1px solid #fff;
  &::before { content: ""; order: 1; width: 419px; height: 15px; background: #cdcdcd; }
  svg + svg { order: 2; margin-left: 15px; }
`;
const VScroll = styled.div<{ $gap: number }>`
  width: 16px;
  display: flex;
  flex-direction: column;
  align-items: center;
  gap: ${(p) => p.$gap}px;
  padding-top: 4px;
  background: #f0f0f0;
`;
const HeaderRow = styled.div`
  width: 660px;
  height: 22px;
  display: flex;
  background: #fff;
`;
const GroupRow = styled.div`
  width: 659px;
  height: 9px;
  padding: 2px 0 0 12px;
  line-height: 16px;
  letter-spacing: -0.1px;
  background: #e7e7e7;
  overflow: hidden;
`;
const Stacked = ({ plus }: { plus?: boolean }) => (
  <svg width="15" height="15" viewBox="0 0 15 15">
    <path d="M4.500 0.500H14.500V11M2.500 2.500H12.500V12.500" fill="none" stroke="#444" />
    <rect x=".700" y="4.700" width="9.600" height="9.600" fill="#fff" stroke="#333" strokeWidth="1.400" />
    <path d={plus ? "M3 9.500H8M5.500 7V12" : "M3 9.500H8"} stroke="#333" strokeWidth="1.500" />
  </svg>
);
const RuleDiamond = () => (
  <svg width="14" height="14" viewBox="-7 -7 14 14">
    {[0, 90, 180, 270].map((a) => <path key={a} d="M0 -7L3 -4L0 -1L-3 -4Z" fill="#e01b10" transform={`rotate(${a})`} />)}
  </svg>
);

/* ---------- status & taskbar ---------- */

const StatusBar = styled.footer`
  height: 34px;
  display: flex;
  align-items: center;
  justify-content: space-between;
  padding: 0 11px 0 6px;
  color: #fff;
  flex: none;
`;
const Recorder = styled.div`
  display: flex;
  align-items: center;
  gap: 8px;
`;
const TaskBar = styled.div`
  height: 30px;
  display: flex;
  flex: none;
  color: #fff;
  background: linear-gradient(90deg, #1a1a1b 0, #151617 30%, #0d0e10 52%, #12191c 60%, #101112 70%, #151414);
`;
const Task = styled.div<{ $open?: boolean; $on?: boolean }>`
  width: 37px;
  height: 30px;
  padding: 0 4.500px;
  margin-left: -10px;
  display: flex;
  flex: none;
  align-items: center;
  justify-content: center;
  background: ${(p) => (p.$on ? "#3c3d3e" : "transparent")};
  position: relative;
  &::after {
    content: "";
    position: absolute;
    left: ${(p) => (p.$on ? 0 : 4)}px;
    right: ${(p) => (p.$on ? 0 : 5)}px;
    bottom: 0;
    height: 2px;
    background: ${(p) => (p.$open || p.$on ? "#84e0e6" : "transparent")};
  }
`;
const Glyph = ({ children, s = 16 }: { children: ReactNode; s?: number }) => (
  <svg width={s} height={s} viewBox="0 0 16 16">{children}</svg>
);
const Letter = styled.text<{ $mono?: boolean }>`
  font-family: ${(p) => (p.$mono ? '"Liberation Mono"' : '"Open Sans"')}, sans-serif;
  font-weight: 700;
  letter-spacing: 0;
  fill: #fff;
`;

const tasks: Item[] = [
  [10, <Glyph><path d="M0 2.300L6.800 1.300V7.500H0ZM7.800 1.100L16 0V7.500H7.800ZM0 8.500H6.800V14.700L0 13.700ZM7.800 8.500H16V16L7.800 14.900Z" fill="#fff" /></Glyph>],
  [46, <Glyph><circle cx="10" cy="6" r="5.300" fill="none" stroke="#fff" strokeWidth="1.300" /><path d="M6 10L.500 15.500" stroke="#fff" strokeWidth="1.400" /></Glyph>],
  [82, <Glyph><path d="M0 2.500H11M0 0V2.500M11 0V2.500M.700 5V11H10.300V5ZM0 13.500H11M0 16V13.500M11 16V13.500M14.500 0V4M14.500 8V16" stroke="#fff" strokeWidth="1.300" fill="none" /><rect x="13" y="4.500" width="3" height="3" fill="#fff" /></Glyph>],
  [120, <Glyph s={17}><path d="M0 1H6L7.500 3H16V14H0Z" fill="#f7c948" /><path d="M0 4.500H16V14H0Z" fill="#ffe58c" /><path d="M3 16V8.500H13V16H10V12H6V16Z" fill="#35a4e8" /></Glyph>],
  [158, <Glyph><circle cx="8" cy="8" r="7" fill="#f7c815" /><path d="M8 8L7 15A7 7 0 0 1 2 4.300L5.500 10Z" fill="#24a355" /><path d="M2 4.300A7 7 0 0 1 14.300 5H8L5.500 9Z" fill="#e24433" /><circle cx="8" cy="8" r="3.300" fill="#fff" /><circle cx="8" cy="8" r="2.600" fill="#4285f4" /></Glyph>],
  [195, <Glyph s={15}><circle cx="8" cy="8" r="7.300" fill="#dfe8ee" /><path d="M4.500 4L11.500 12.500M7.500 2C5.500 6 11 9 8.500 14" stroke="#426478" strokeWidth="2.200" fill="none" /></Glyph>],
  [233, <Glyph><path d="M8 0L15 3V12L8 16L1 12V3Z" fill="#87a9d2" /><path d="M8 0L15 3L8 6.500L1 3Z" fill="#e0ecf8" /><path d="M8 6.500L15 3V12L8 16Z" fill="#52719f" /></Glyph>],
  [270, <Glyph><circle cx="9" cy="8" r="6.500" fill="#3a2a73" /><path d="M6 2A7 7 0 0 0 6 14A9 9 0 0 1 6 2Z" fill="#f2902c" /><path d="M3 5.500H15M2.500 8H15.500M3 10.500H15" stroke="#fff" strokeWidth="1.200" /></Glyph>],
  [306, <Glyph><rect width="16" height="16" fill="#4a4a4a" /><path d="M4 5.500L12 3V6L7.500 7.500L12 9.500V11L4 13.500V10.800L9 9L4 7.500Z" fill="#ff9800" /></Glyph>],
  [343, <Glyph><rect width="16" height="16" fill="#0c84e0" /><circle cx="8" cy="8" r="6.500" fill="#fff" /><path d="M2.500 8L6 5.500V7.200H10V5.500L13.500 8L10 10.500V8.800H6V10.500Z" fill="#0c64b8" /></Glyph>],
  [380, <Glyph><rect width="16" height="16" fill="#2c6488" /><path d="M2 2C7 2 11 5 12 10L15 13L11 12L12 15C8 13 6 9 4 13C5 8 4 5 2 2Z" fill="#1c4f6e" stroke="#b8d4e4" strokeWidth=".9" /></Glyph>],
  [417, <Glyph><circle cx="8" cy="8" r="7.700" fill="#f7662f" /><circle cx="8" cy="8" r="6" fill="#fff" /><path d="M12 3.500L5 7.500L8.500 12L12.500 10" stroke="#f7662f" strokeWidth="2" fill="none" /></Glyph>],
  [454, <Glyph><rect x="1" y="1" width="14" height="14" fill="#050505" /><Letter $mono x="2.500" y="8.500" fontSize="7.500">IJ</Letter><path d="M2.500 12.500H7.500" stroke="#fff" /></Glyph>],
  [491, <Glyph><path d="M11.500 0L16 2V14L11.500 16L4 9.500L1.500 11.500L0 10.500V5.500L1.500 4.500L4 6.500ZM11.500 4.500L7 8L11.500 11.500Z" fill="#1f8bd2" fillRule="evenodd" /><path d="M11.500 0L16 2V14L11.500 16Z" fill="#36aaf0" /></Glyph>],
  [528, <Glyph><path d="M2 1H15L14 15H0Z" fill="#8ec5cc" /><path d="M2 1H15V3H2Z" fill="#dcecef" /><path d="M3 6H13M3 9H12M2 12H12" stroke="#659fa9" strokeWidth=".8" /></Glyph>],
  [565, <Glyph><path d="M11.500 0L16 2V14L11.500 16L1.500 6L0 5V11L1.500 12L11.500 3.500" fill="none" stroke="#a068d8" strokeWidth="2" /><path d="M12 0L16 2V14L12 16Z" fill="#b98aec" /></Glyph>],
  [602, <Glyph><path d="M9 2H16V14H9Z" fill="#fff" stroke="#d24726" /><path d="M11 5H15M11 8H15M11 11H15" stroke="#d24726" /><path d="M0 1.500L10 0V16L0 14.500Z" fill="#d24726" /><Letter x="2" y="12" fontSize="10">P</Letter></Glyph>],
  [639, <Glyph><path d="M9 2H16V14H9Z" fill="#fff" stroke="#2b579a" /><path d="M10 4.500H15M10 7H15M10 9.500H15M10 12H15" stroke="#2b579a" /><path d="M0 1.500L10 0V16L0 14.500Z" fill="#2b579a" /><Letter x="1" y="11.500" fontSize="8.500">W</Letter></Glyph>],
  [676, <AppLogo c="#45545c" s={13} />],
];
const running = new Set([4, 14, 15, 16, 17]);

const menu: Item[] = (
  [[8, "File"], [39, "View"], [74, ""], [84, "Dashboard"], [154, "Rules"], [195, "Issues"], [239, "Graph"], [284, "Matrix"], [330, "Diff"],
  [362, "Trend"], [406, "Metrics"], [458, "Coverage"], [521, "Plugins"], [573, "Search"], [618, ""], [628, "Project"], [678, "Analyze"],
  [732, "Report"], [777, ""], [787, "Tools"], [826, ""], [836, "Help"]] as [number, string][]
).map(([x, t]) => [x, t ? <Text>{t}</Text> : <Sep $h={17} />]);

export default function App() {
  return (
    <Window>
      <Global />
      <TitleBar>
        <Run from={0} items={[
          [3, <AppLogo />],
          [23, <Text $ls={-0.38}>demo&nbsp; (analysis done Today 00:25 most recent)</Text>],
          [1245, <svg width="10" height="1"><rect width="10" height="1" /></svg>],
          [1290, <svg width="10" height="10" viewBox="0 0 10 10"><path d="M.500 2.500H7.500V9.500H.500ZM2.500 2.500V.500H9.500V7.500H7.500" fill="none" stroke="#000" /></svg>],
          [1336, <svg width="10" height="10" viewBox="0 0 10 10"><path d="M0 0L10 10M10 0L0 10" stroke="#000" strokeWidth="1.100" /></svg>],
        ]} />
      </TitleBar>
      <MenuBar><Run from={0} items={menu} /></MenuBar>
      <ToolBand>
        <ToolStrip>
          <Run from={0} items={[
            [3, <Grip />], [15, <NewProject />], [42, <OpenProject />], [66, <Sep />], [75, <DocSearch />], [99, <Sep />],
            [111, <Play />], [135, <PlayDoc />], [159, <OverCaret />], [173, <Grip />], [187, <RoundArrow />], [210, <Caret w={5} c="#8d93a0" />],
            [224, <RoundArrow right />], [247, <Caret w={5} c="#8d93a0" />], [258, <Sep />], [262, <Toggle $w={26} $h={24}><Hierarchy /></Toggle>],
            [295, <Ladder />], [317, <Sep />], [328, <Magnifier />], [353, <Refresh />], [379, <Gear />], [403, <OverCaret />],
          ]} />
        </ToolStrip>
      </ToolBand>

      <Workspace>
        <Column $w={187}>
          <Head title="Class Browser" />
          <TreeBox>
            <TreeRow $depth={0}><Chevron dir="down" c="#444" w={9} /><RootIcon /><span>demo</span></TreeRow>
            {["cli", "cppcheck", "testrunner", "Externals"].map((t) => (
              <TreeRow key={t} $depth={1} $link={t === "Externals"}>
                <Chevron dir="right" c="#a0a0a0" w={8} /><NamespaceIcon /><span>{t}</span>
              </TreeRow>
            ))}
          </TreeBox>
          <Tabs $top={2}>
            <Slot $w={1} />
            <Tab $w={64} $on $pad={5} $ls={-0.3}>Class Bro...</Tab><Tab $w={58} $line $pad={2} $ls={-0.25}>Queries ...</Tab><Tab $w={61} $line $ls={-0.15}>Search ...</Tab>
          </Tabs>
        </Column>

        <Column $w={1167}>
          <TopRow>
            <Column $w={967}>
              <Head title="Metrics" active />
              <MetricBars>
                <Row $h={28}>
                  <Run from={196} items={[
                    [204, <Refresh />], [226, <Caret />], [238, <Sep />], [252, <Text $c="#3b4a66">Level</Text>],
                    [288, <Select $w={85}>Method<Caret c="#66758f" w={7} /></Select>], [392, <Sep />], [403, <Text $c="#2b3a56">Size</Text>],
                    [432, <Select $w={190}># lines of code (LOC)<Caret c="#66758f" w={7} /></Select>], [633, <Bars />], [654, <Caret />],
                    [668, <BarsHelp />], [704, <Sep />], [720, <Toggle $w={59} $h={24} $gap={4}><Palette /><Text $ls={-0.2}>Color</Text></Toggle>],
                    [783, <Select $w={190}>Cyclomatic Complexity (CC)<Caret c="#66758f" w={7} /></Select>], [984, <Bars />], [1005, <Caret />], [1019, <BarsHelp />],
                  ]} />
                </Row>
                <Rule $m="5px 2px 0 4px" />
                <Row $h={29}>
                  <Run from={196} items={[
                    [214, <Fit />], [232, <Text $ls={-0.2}>Fit in Window</Text>], [329, <Lens />], [351, <Text>x1</Text>], [375, <Lens minus />], [409, <Sep />],
                    [431, <Camera />], [456, <Gear />], [482, <Help />],
                  ]} />
                </Row>
              </MetricBars>
              <MetricBody>
                <MapArea><TreeMap /></MapArea>
                <Controls>
                  <LimitRow>Max<NumberBox>30</NumberBox></LimitRow>
                  <Row $h={14} />
                  <Scale />
                  <Row $h={14} />
                  <LimitRow>Min<NumberBox>0</NumberBox></LimitRow>
                  <Rule $m="8px 15px 8px" $c="#bdbdbd" />
                  <CheckRow><Checked />Gradient</CheckRow>
                  <CheckRow><Checked />Beyond<Nudge><InfoDot /></Nudge></CheckRow>
                  <ButtonRow $top={8} $left={28}>
                    <GreyButton $w={25}>
                      <svg width="17" height="16" viewBox="0 0 17 16"><path d="M2 10.500L6 7H15.500V14H6Z" fill="#fff" stroke="#333" /><rect x="7" y="8.500" width="7" height="4" fill="#bbb" /><path d="M0 3.500H6M3 .500V6.500" stroke="#2f8f36" strokeWidth="2" /></svg>
                    </GreyButton>
                    <GreyButton $w={25}>
                      <svg width="17" height="16" viewBox="0 0 17 16"><path d="M2 10.500L6 7H15.500V14H6Z" fill="#eee" stroke="#999" /><rect x="7" y="8.500" width="7" height="4" fill="#bbb" /><path d="M1 1L7 7M7 1L1 7" stroke="#999" strokeWidth="2" /></svg>
                    </GreyButton>
                  </ButtonRow>
                  <ButtonRow $top={6}><DisabledCombo><Chevron dir="down" c="#b4b4b4" w={9} /></DisabledCombo></ButtonRow>
                  <Rule $m="10px 15px 0" $c="#bdbdbd" />
                  <ButtonRow $top={10}><GreyButton $w={57}>Reset</GreyButton></ButtonRow>
                </Controls>
              </MetricBody>
              <Tabs $top={1}>
                <Tab $w={66} $line $pad={6} $ls={-0.8}>Dashboard</Tab><Tab $w={103} $line $pad={3} $ls={-0.7}>Dependency Graph</Tab><Tab $w={102} $pad={3} $ls={-0.68}>Dependency Matrix</Tab>
                <Tab $w={49} $on $pad={5}>Metrics</Tab><Tab $w={95} $line $pad={1}>Project Properties</Tab><Tab $w={62} $line $pad={3} $ls={-0.4}>Start Page</Tab><Tab $w={96} $line>Analysis Error List</Tab>
              </Tabs>
            </Column>
            <Column $w={194}>
              <Head title="Info" />
              <InfoBody>
                <InfoLink>Show Info in Tooltip</InfoLink>
                <InfoText>Hover a code element with the mouse to get<br />detailed information here</InfoText>
              </InfoBody>
            </Column>
          </TopRow>

          <Head title="Queries and Rules Explorer" />
          <QueryBody>
            <QueryPane $w={485}>
              <Row $h={30}>
                <Run from={196} items={[
                  [204, <Stacked plus />], [230, <Stacked />], [269, <Text>Create Group</Text>],
                  [360, <Text>Rule File</Text>], [407, <Caret w={5} />], [432, <Text>Delete</Text>], [490, <InfoDot />],
                ]} />
              </Row>
              <Listing>
                <div>
                  <RuleRow>
                    <Run from={196} items={[
                      [202, <Chevron dir="down" c="#444" w={9} />], [218, <Checked />], [232, <RuleDiamond />],
                      [249, <Selected>Project Rules</Selected>], [333, <Text $c="#9b9b9b" $italic $ls={0}>(530 queries)</Text>],
                    ]} />
                  </RuleRow>
                  <HScroll><Chevron dir="left" /><Chevron dir="right" /></HScroll>
                </div>
                <VScroll $gap={0}><Chevron dir="up" w={7} /><Chevron dir="down" w={7} /></VScroll>
              </Listing>
            </QueryPane>
            <QueryPane $w={676}>
              <Row $h={30}>
                <Run from={687} items={[
                  [693, <Text>Create Query</Text>], [783, <Text $c="#8f98aa">Delete Query</Text>], [886, <RoundArrow />], [912, <RoundArrow right />],
                  [932, <Select $w={250} $h={26} $flat>Project Rules<Caret w={5} /></Select>],
                  [1194, <Toggle $w={119} $h={26} $gap={5}><Hierarchy /><Text>View Sub Groups</Text></Toggle>],
                ]} />
              </Row>
              <Listing>
                <div>
                  <HeaderRow>
                    <Run from={687} items={[
                      [693, <Text $size={11.5} $ls={-0.35}>Active</Text>], [731, <Sep $h={22} $c="#ddd" />], [747, <Sep $h={22} $c="#ddd" />], [755, <Text $size={11.5} $ls={-0.35}>#Items</Text>],
                      [856, <Sep $h={22} $c="#ddd" />], [863, <Text $size={11.5} $ls={-0.6}>Code Queries and Rules</Text>],
                    ]} />
                  </HeaderRow>
                  <GroupRow>Project Rules \ Quality Gates</GroupRow>
                </div>
                <VScroll $gap={8}><Chevron dir="up" /><Chevron dir="down" /></VScroll>
              </Listing>
            </QueryPane>
          </QueryBody>
        </Column>
      </Workspace>

      <StatusBar>
        <Text $ls={-0.3}>Ready</Text>
        <Recorder>
          <Sep $h={24} $c="#ccd2e0" />
          <svg width="20" height="20" viewBox="0 0 20 20"><circle cx="10" cy="10" r="8.700" fill="#f00" stroke="#fff" strokeWidth="1.700" /></svg>
        </Recorder>
      </StatusBar>

      <TaskBar>
        <Run from={0} items={[
          ...tasks.map(([x, icon], i): Item => [x, <Task $open={running.has(i)} $on={i === 18}>{icon}</Task>]),
          [1070, <Glyph><circle cx="11.500" cy="3.500" r="2.800" fill="none" stroke="#fff" strokeWidth="1.200" /><circle cx="5" cy="8.500" r="2.800" fill="none" stroke="#fff" strokeWidth="1.200" /><path d="M.700 15.500C1 11 9 11 9.300 15.500M9 7.500C12 6.500 15 7.500 15.400 11" fill="none" stroke="#fff" strokeWidth="1.200" /></Glyph>],
          [1102, <svg width="12" height="7" viewBox="0 0 12 7"><path d="M.500 6.500L6 1L11.500 6.500" stroke="#fff" strokeWidth="1.300" fill="none" /></svg>],
          [1124, <Glyph><rect width="16" height="16" fill="#f3d9d9" /><path d="M2 2H6L8.500 10L12 2H14L9.500 14H7Z" fill="#c62828" /></Glyph>],
          [1148, <Glyph><path d="M5 5.500H15.500V12.500H6M2.500 8V13M1 3V6.500H4.500V3M2 1V3M4 1V3" stroke="#fff" fill="none" /><path d="M8 7L12 11M12 7L8 11" stroke="#fff" strokeWidth="1.200" /></Glyph>],
          [1172, <Glyph><path d="M.500 5.500H3L7 2V14L3 10.500H.500Z" fill="none" stroke="#fff" strokeWidth="1.200" /><path d="M9 6Q10.500 8 9 10" stroke="#fff" fill="none" strokeWidth="1.200" /><path d="M11 4Q14 8 11 12M13 2Q17.500 8 13 14" stroke="#888" fill="none" /></Glyph>],
          [1198, <Glyph s={15}><path d="M1 15A14 14 0 0 1 15 3M4 15A11 11 0 0 1 15 6.500M7.500 15A8 8 0 0 1 15 10" stroke="#ccc" strokeWidth="1.300" fill="none" /><circle cx="13" cy="14" r="1.600" fill="#fff" /></Glyph>],
          [1222, <Text $ls={-0.5}>ENG</Text>],
          [1258, <Text $ls={-0.35}>12:31 AM</Text>],
          [1325, <Glyph><path d="M0 0H16V12.500H11L8 16V12.500H0Z" fill="#fff" /><path d="M3 3.500H13M3 6.500H13M3 9.500H9" stroke="#111" strokeWidth="1.200" /></Glyph>],
          [1361, <Sep $h={30} $c="#606060" />],
        ]} />
      </TaskBar>
    </Window>
  );
}
